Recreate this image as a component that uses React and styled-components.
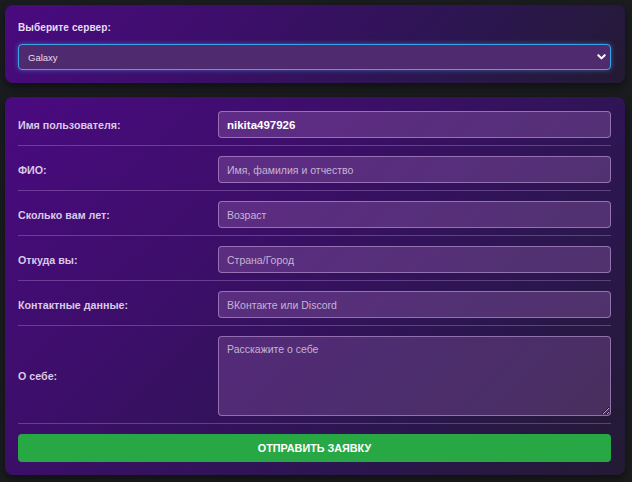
import React from "react";
import styled, { createGlobalStyle } from "styled-components";

const Global = createGlobalStyle`
  html, body { margin: 0; padding: 0; background: #1b1c1f; }
  body { font-family: "Liberation Sans", Arial, sans-serif; }
  * { box-sizing: border-box; }
`;

const Page = styled.div`
  padding: 5px 7px 7px 5px;
  display: flex;
  flex-direction: column;
  gap: 14px;
  width: 632px;
`;

const Card = styled.div`
  border-radius: 8px;
  padding: ${(p) => (p.$form ? "14px 14px 13px 13px" : "13px 14px 13px 13px")};
  background: linear-gradient(135deg, #4a0a80 0%, #3a0f66 40%, #2c1650 70%, #231a33 100%);
  box-shadow: 0 4px 10px rgba(0, 0, 0, 0.45);
`;

const ServerLabel = styled.div`
  font-family: "Liberation Sans", Arial, sans-serif;
  font-weight: bold;
  font-size: 10px;
  letter-spacing: 0.1px;
  color: #eadcf5;
  line-height: 20px;
  margin: 0 0 6px 0;
`;

const SelectWrap = styled.div`
  position: relative;
`;

const Select = styled.select`
  appearance: none;
  -webkit-appearance: none;
  width: 100%;
  height: 26px;
  border-radius: 4px;
  border: 1px solid #3ea4e8;
  box-shadow: 0 0 5px rgba(62, 164, 232, 0.55);
  background: #4f2a6e;
  color: #e6dcf0;
  font-family: "Liberation Sans", Arial, sans-serif;
  font-size: 9.5px;
  padding: 0 0 0 9px;
  outline: none;
`;

const Chevron = styled.svg`
  position: absolute;
  right: 4px;
  top: 8px;
  width: 11px;
  height: 10px;
  pointer-events: none;
`;

const Row = styled.div`
  display: grid;
  grid-template-columns: 200px 1fr;
  align-items: center;
  padding-bottom: 7px;
  margin-bottom: 10px;
  border-bottom: 1px solid rgba(190, 150, 220, 0.35);
`;

const Label = styled.label`
  font-weight: bold;
  font-size: 10.7px;
  color: #d9c9e8;
`;

const Input = styled.input`
  height: 27px;
  width: 100%;
  border-radius: 4px;
  border: 1px solid rgba(200, 170, 225, 0.55);
  background: rgba(145, 95, 170, 0.38);
  color: #ffffff;
  font-family: "Liberation Sans", Arial, sans-serif;
  font-size: ${(p) => (p.$strong ? "11.5px" : "10.5px")};
  font-weight: ${(p) => (p.$strong ? "bold" : "normal")};
  padding: 0 8px;
  outline: none;
  &::placeholder { color: #c4b4d4; }
`;

const TextArea = styled.textarea`
  height: 80px;
  width: 100%;
  border-radius: 4px;
  border: 1px solid rgba(200, 170, 225, 0.55);
  background: rgba(145, 95, 170, 0.32);
  color: #ffffff;
  font-family: "Liberation Sans", Arial, sans-serif;
  font-size: 10.5px;
  padding: 6px 8px;
  outline: none;
  resize: vertical;
  display: block;
  &::placeholder { color: #c4b4d4; }
`;

const Button = styled.button`
  width: 100%;
  height: 28px;
  border: none;
  border-radius: 4px;
  background: #28a745;
  color: #ffffff;
  font-family: "Liberation Sans", Arial, sans-serif;
  font-weight: bold;
  font-size: 10.8px;
  text-transform: uppercase;
  cursor: pointer;
`;

const fields = [
  { label: "Имя пользователя:", value: "nikita497926" },
  { label: "ФИО:", placeholder: "Имя, фамилия и отчество" },
  { label: "Сколько вам лет:", placeholder: "Возраст" },
  { label: "Откуда вы:", placeholder: "Страна/Город" },
  { label: "Контактные данные:", placeholder: "ВКонтакте или Discord" },
];

export default function App() {
  return (
    <>
      <Global />
      <Page>
        <Card>
          <ServerLabel>Выберите сервер:</ServerLabel>
          <SelectWrap>
            <Select defaultValue="Galaxy">
              <option>Galaxy</option>
            </Select>
            <Chevron viewBox="0 0 12 10">
              <path d="M2.5 3 L6 6.5 L9.5 3" fill="none" stroke="#ffffff" strokeWidth="2.2" strokeLinecap="round" strokeLinejoin="round" />
            </Chevron>
          </SelectWrap>
        </Card>
        <Card $form>
          {fields.map((f) => (
            <Row key={f.label}>
              <Label>{f.label}</Label>
              {f.value ? (
                <Input $strong defaultValue={f.value} />
              ) : (
                <Input placeholder={f.placeholder} />
              )}
            </Row>
          ))}
          <Row>
            <Label>О себе:</Label>
            <TextArea placeholder="Расскажите о себе" />
          </Row>
          <Button>Отправить заявку</Button>
        </Card>
      </Page>
    </>
  );
}
